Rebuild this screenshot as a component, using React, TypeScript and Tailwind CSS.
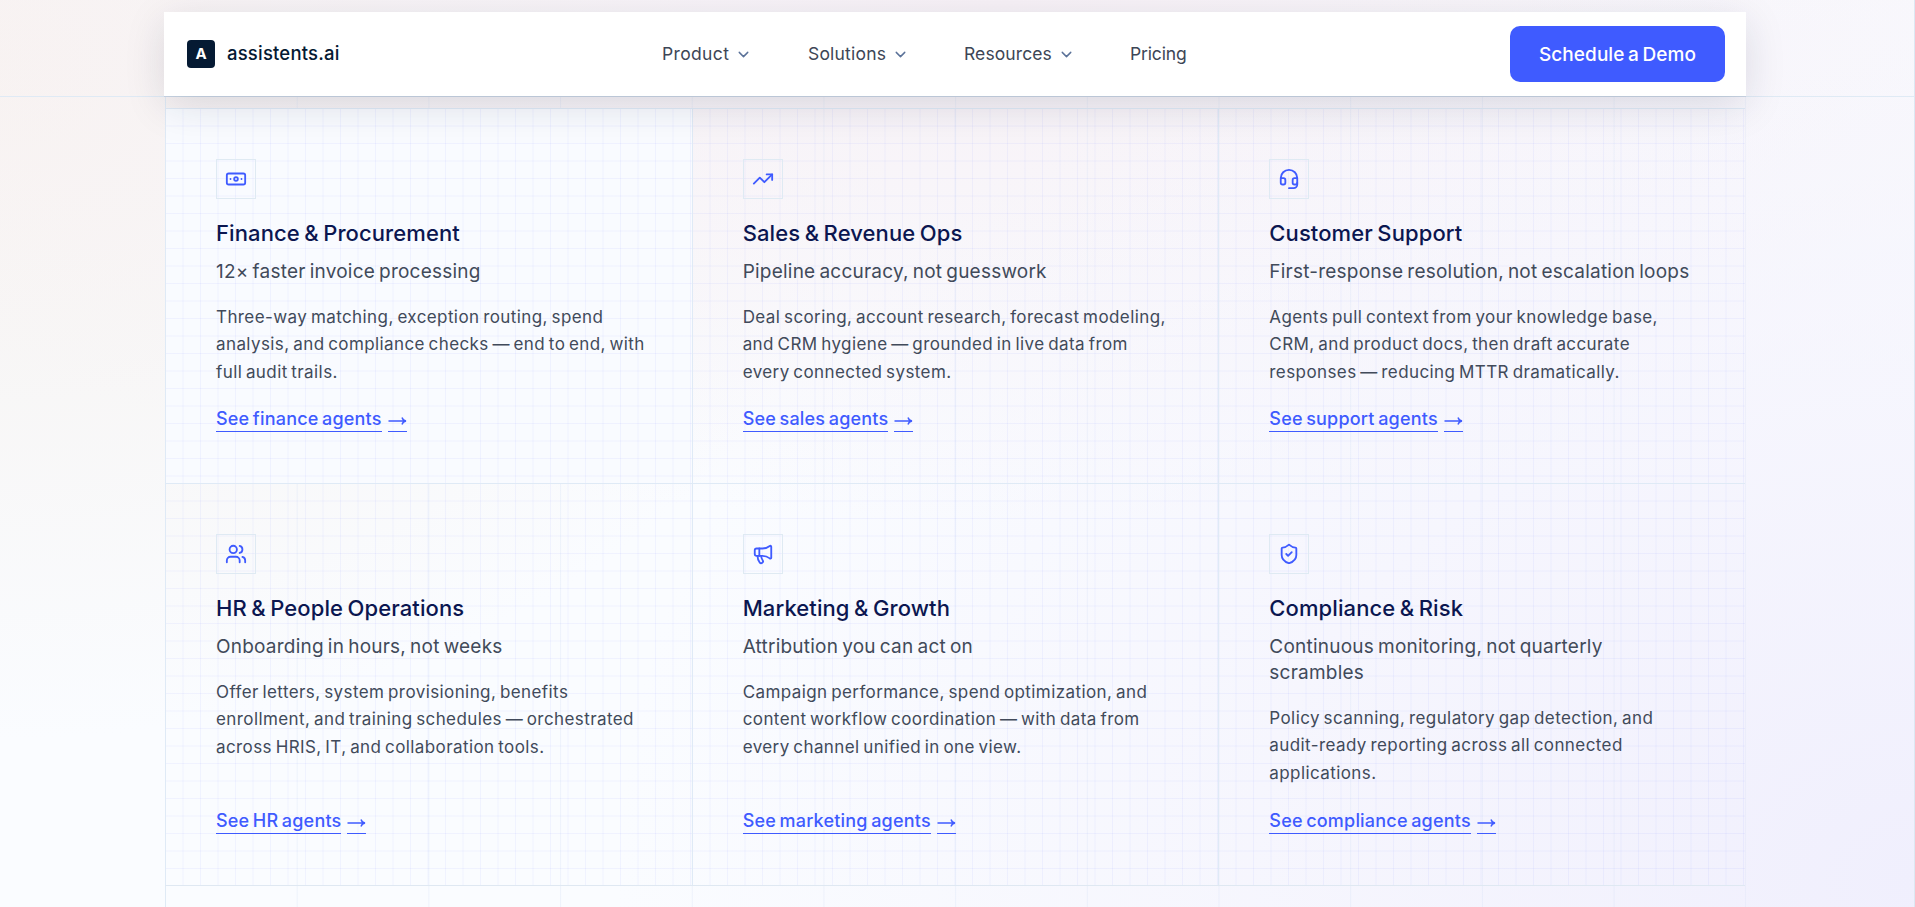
import React from "react";
import { Banknote, TrendingUp, Headset, Users, Megaphone, ShieldCheck, ChevronDown } from "lucide-react";

type Card = { icon: React.ElementType; title: string; sub: string[]; body: string[]; link: string };

const cards: Card[] = [
  { icon: Banknote, title: "Finance & Procurement", sub: ["12× faster invoice processing"], body: ["Three-way matching, exception routing, spend", "analysis, and compliance checks — end to end, with", "full audit trails."], link: "See finance agents" },
  { icon: TrendingUp, title: "Sales & Revenue Ops", sub: ["Pipeline accuracy, not guesswork"], body: ["Deal scoring, account research, forecast modeling,", "and CRM hygiene — grounded in live data from", "every connected system."], link: "See sales agents" },
  { icon: Headset, title: "Customer Support", sub: ["First-response resolution, not escalation loops"], body: ["Agents pull context from your knowledge base,", "CRM, and product docs, then draft accurate", "responses — reducing MTTR dramatically."], link: "See support agents" },
  { icon: Users, title: "HR & People Operations", sub: ["Onboarding in hours, not weeks"], body: ["Offer letters, system provisioning, benefits", "enrollment, and training schedules — orchestrated", "across HRIS, IT, and collaboration tools."], link: "See HR agents" },
  { icon: Megaphone, title: "Marketing & Growth", sub: ["Attribution you can act on"], body: ["Campaign performance, spend optimization, and", "content workflow coordination — with data from", "every channel unified in one view."], link: "See marketing agents" },
  { icon: ShieldCheck, title: "Compliance & Risk", sub: ["Continuous monitoring, not quarterly", "scrambles"], body: ["Policy scanning, regulatory gap detection, and", "audit-ready reporting across all connected", "applications."], link: "See compliance agents" },
];

function FeatureCard({ card, first }: { card: Card; first: boolean }) {
  const Icon = card.icon;
  return (
    <article
      className={`flex flex-col items-start border-l border-t border-[#dfeaf6] bg-[linear-gradient(to_right,transparent_16.5px,rgba(99,119,255,0.07)_16.5px),linear-gradient(to_bottom,transparent_16.5px,rgba(99,119,255,0.07)_16.5px)] bg-[size:17.5px_17.5px] pl-[50px] pt-[50px] [word-spacing:-1.5px] ${first ? "bg-[#f9fbff]" : ""}`}
    >
      <div className="flex size-10 shrink-0 items-center justify-center border border-[#dfeaf3]">
        <Icon size={22} strokeWidth={2} className="text-[#3f5bff]" />
      </div>
      <h3 className="mt-[19px] whitespace-nowrap text-[22px] font-medium leading-[30px] tracking-[0.1px] text-[#0b1650]">{card.title}</h3>
      <div className="mt-[11px] text-[19px] font-[370] leading-[26px] tracking-[0.22px] text-[#414a5a]">
        {card.sub.map((l) => <p key={l} className="whitespace-nowrap">{l}</p>)}
      </div>
      <div className="mt-[19px] text-[17px] font-[380] leading-[27.3px] tracking-[0.41px] text-[#414a5a]">
        {card.body.map((l) => <p key={l} className="whitespace-nowrap">{l}</p>)}
      </div>
      <a className="mb-[51px] mt-auto flex gap-[6px] whitespace-nowrap text-[18px] font-medium leading-[24px] tracking-[0.2px] text-[#3f5bff]">
        <span className="border-b border-[#3f5bff]">{card.link}</span>
        <span className="flex w-[19px] items-center border-b border-[#3f5bff]">
          <svg viewBox="0 0 19 12" className="mt-[3px] h-3 w-[19px]" fill="none" stroke="currentColor" strokeWidth="1.4"><path d="M.5 6H18M14 2.500c.6 1.900 2 3.100 4 3.500-2 .4-3.400 1.600-4 3.500" /></svg>
        </span>
      </a>
    </article>
  );
}

export default function App() {
  return (
    <div className="relative h-[907px] w-full overflow-hidden border-r border-[#dce8f3] bg-[#fafcff] bg-[radial-gradient(ellipse_1300px_1000px_at_1915px_880px,rgba(240,239,253,1),rgba(244,243,253,0.75)_45%,transparent),radial-gradient(ellipse_1400px_520px_at_1000px_0px,rgba(247,241,246,1),transparent),radial-gradient(ellipse_900px_680px_at_0px_60px,rgba(248,243,240,1),rgba(247,245,244,0.8)_45%,transparent)] font-[Inter,sans-serif]">
      <div className="box-content h-24 border-b border-[#dfeaf5]" />
      <main className="ml-[165px] h-[810px] w-[1581px] border-l border-[#dfeaf5] bg-[linear-gradient(to_right,transparent_130.6px,rgba(200,214,240,0.25)_130.6px)] bg-[size:131.7px_100%] pt-[11px]">
        <div className="-ml-px grid w-[1580px] grid-cols-3 grid-rows-[375px_402px] border-b border-[#dfe8f2]">
          {cards.map((c, i) => <FeatureCard key={c.title} card={c} first={i === 0} />)}
        </div>
      </main>
      <header className="absolute left-[164px] top-3 flex h-[84px] w-[1582px] items-center bg-white pl-[23px] pr-[21px] shadow-[0_10px_40px_rgba(20,30,60,0.13),0_1px_0_#cbd7e5]">
        <div className="flex items-center gap-3">
          <span className="flex size-7 items-center justify-center rounded bg-[#051a33] text-[15px] font-bold text-white">A</span>
          <span className="text-[18.500px] font-medium tracking-[0.2px] text-[#051a33]">assistents.ai</span>
        </div>
        <nav className="absolute left-[498px] flex text-[17.500px] tracking-[0.2px] text-[#3d4656]">
          <span className="flex w-[146px] items-center gap-[6px] tracking-[0.35px]">Product<ChevronDown size={17} className="text-[#5b7299]" /></span>
          <span className="flex w-[156px] items-center gap-[6px]">Solutions<ChevronDown size={17} className="text-[#5b7299]" /></span>
          <span className="flex w-[166px] items-center gap-[6px] tracking-[0.1px]">Resources<ChevronDown size={17} className="text-[#5b7299]" /></span>
          <span className="pt-px tracking-[-0.15px]">Pricing</span>
        </nav>
        <button className="ml-auto h-14 w-[215px] rounded-[10px] bg-[#3f5bff] pt-[3px] text-[19px] font-medium tracking-[0.06px] text-white [word-spacing:-1.5px]">Schedule a Demo</button>
      </header>
      <div className="absolute right-[-1px] top-[147px] h-[47px] w-px bg-[#2a3ab0]" />
    </div>
  );
}
